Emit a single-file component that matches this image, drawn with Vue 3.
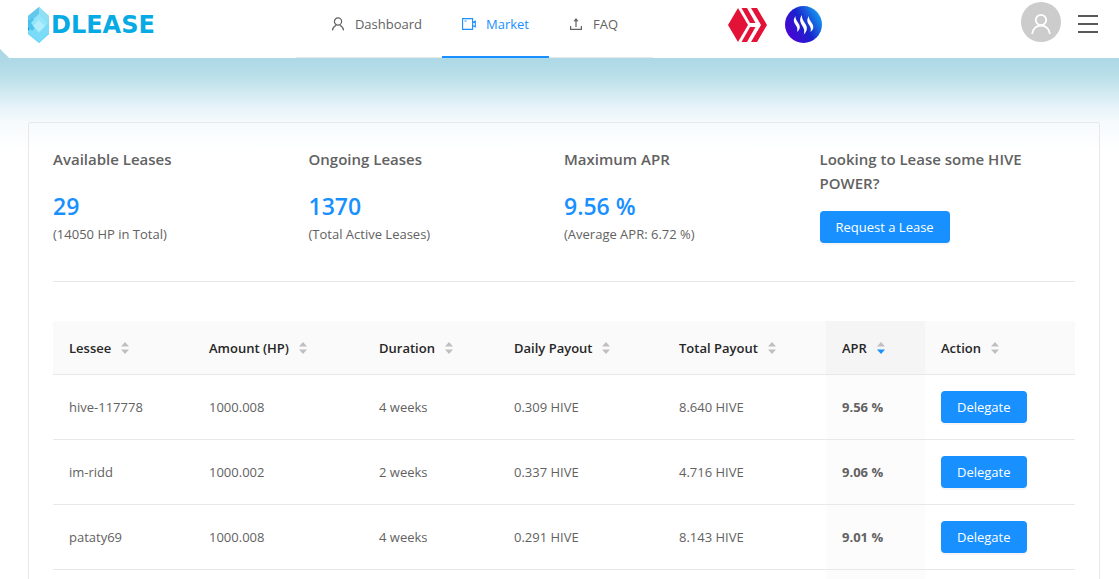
<script setup>
const stats = [
  { title: 'Available Leases', value: '29', note: '(14050 HP in Total)' },
  { title: 'Ongoing Leases', value: '1370', note: '(Total Active Leases)' },
  { title: 'Maximum APR', value: '9.56 %', note: '(Average APR: 6.72 %)' },
]
const columns = [
  { key: 'lessee', label: 'Lessee' },
  { key: 'amount', label: 'Amount (HP)' },
  { key: 'duration', label: 'Duration' },
  { key: 'daily', label: 'Daily Payout' },
  { key: 'total', label: 'Total Payout' },
  { key: 'apr', label: 'APR', sorted: true },
  { key: 'action', label: 'Action' },
]
const rows = [
  { lessee: 'hive-117778', amount: '1000.008', duration: '4 weeks', daily: '0.309 HIVE', total: '8.640 HIVE', apr: '9.56 %' },
  { lessee: 'im-ridd', amount: '1000.002', duration: '2 weeks', daily: '0.337 HIVE', total: '4.716 HIVE', apr: '9.06 %' },
  { lessee: 'pataty69', amount: '1000.008', duration: '4 weeks', daily: '0.291 HIVE', total: '8.143 HIVE', apr: '9.01 %' },
]
</script>

<template>
  <div class="page">
    <header class="header">
      <a class="logo" href="#" aria-label="Dlease home">
        <svg width="22" height="36" viewBox="0 0 22 36" aria-hidden="true">
          <path d="M11 0 21 9v18L11 36 0 27V9z" fill="#7cdcf8" />
          <path d="M11 0 0 9v7l11-9z" fill="#63c9ec" />
          <path d="M11 0 21 9v7L11 7z" fill="#8fdff5" />
          <path d="M0 13 5 18 0 24z" fill="#12a5da" />
          <path d="M0 15 4 11 11 17 4 24 0 20z" fill="#4cc3eb" />
          <path d="M11 7 20 16 11 26 3 16z" fill="#94e4fa" />
          <path d="M11 13 17 19 11 25 5 19z" fill="#b0eefd" />
          <path d="M0 24 11 34 21 24v3L11 36 0 27z" fill="#74d9f8" />
        </svg>
        <span class="wordmark">DLEASE</span>
      </a>
      <nav class="nav">
        <a class="nav-item" href="#">
          <svg width="14" height="14" viewBox="0 0 14 14" fill="none" stroke="currentColor" stroke-width="1.2" aria-hidden="true">
            <circle cx="7" cy="4.5" r="3.6" /><path d="M1.400 13.400c.3-2.600 1.800-4.300 3.700-5.200M12.600 13.400c-.3-2.600-1.800-4.300-3.700-5.200" />
          </svg>
          Dashboard
        </a>
        <a class="nav-item active" href="#">
          <svg width="14" height="14" viewBox="0 0 14 14" fill="none" stroke="currentColor" stroke-width="1.1" aria-hidden="true">
            <path d="M.6 1.600h10v10.800H.6zM10.600 5.500l2.700-1.300v5.600l-2.700-1.300M2.500 4h2" />
          </svg>
          Market
        </a>
        <a class="nav-item" href="#">
          <svg width="14" height="14" viewBox="0 0 14 14" fill="none" stroke="currentColor" stroke-width="1.200" aria-hidden="true">
            <path d="M1.600 9v3.400h10.800V9M7 10V3" /><path d="M7 1 9.500 4.200h-5z" fill="currentColor" stroke="none" />
          </svg>
          FAQ
        </a>
      </nav>
      <div class="chains">
        <a href="#" aria-label="Hive">
          <svg width="39" height="34" viewBox="0 0 39 34" fill="#e31337" aria-hidden="true">
            <path d="M10 0 20 17 10 34 0 17z" />
            <path d="M13.500 0h5.500l8.500 15h-5.500z" /><path d="M22 19h5.500l-8.500 15h-5.500z" />
            <path d="M23 0h6l10 17-10 17h-6l10-17z" />
          </svg>
        </a>
        <a href="#" aria-label="Steem">
          <svg width="37" height="37" viewBox="0 0 37 37" aria-hidden="true">
            <defs><linearGradient id="steem" x1="0" y1="0.800" x2="1" y2="0.200"><stop offset="0" stop-color="#5200d6" /><stop offset=".5" stop-color="#1a22cc" /><stop offset="1" stop-color="#15a8f4" /></linearGradient></defs>
            <circle cx="18.500" cy="18.500" r="18.500" fill="url(#steem)" />
            <g fill="#fff">
              <path d="M10.500 10c-2 2.500-2.200 5-.8 7.500l2 3.300c.9 1.700.8 3.200.3 5.200 2.800-2.400 3.500-5 2.200-7.600l-2.400-3.700c-1-1.600-1.500-2.800-1.300-4.700z" />
              <path d="M17 9c-2.200 2.800-2.400 5.600-1 8.500l2.500 4.500c1 2 .9 4 .3 6.500 3.100-3 3.900-6.200 2.400-9.300l-2.900-4.700c-1-1.700-1.500-3.200-1.300-5.500z" />
              <path d="M24 10c-2 2.500-2.200 5-.8 7.500l2 3.300c.9 1.700.8 3.200.3 5.200 2.800-2.400 3.500-5 2.200-7.600l-2.400-3.700c-1-1.600-1.500-2.800-1.300-4.700z" />
            </g>
          </svg>
        </a>
      </div>
      <div class="account">
        <button class="avatar" type="button" aria-label="Account">
          <svg width="20" height="22" viewBox="0 0 20 22" fill="none" stroke="#fff" stroke-width="1.800" aria-hidden="true">
            <circle cx="10" cy="7" r="5.200" /><path d="M1.200 21c.3-5.200 4-8.500 8.800-8.500s8.500 3.300 8.800 8.500" />
          </svg>
        </button>
        <button class="burger" type="button" aria-label="Menu"><i /><i /><i /></button>
      </div>
    </header>

    <main class="main">
      <section class="card">
        <div class="stats">
          <div v-for="s in stats" :key="s.title">
            <h2 class="stat-title">{{ s.title }}</h2>
            <div class="stat-value">{{ s.value }}</div>
            <div class="stat-note">{{ s.note }}</div>
          </div>
          <div>
            <h2 class="stat-title request">Looking to Lease some HIVE POWER?</h2>
            <button class="btn" type="button">Request a Lease</button>
          </div>
        </div>

        <table class="table">
          <colgroup><col v-for="c in columns" :key="c.key" :class="'col-' + c.key"></colgroup>
          <thead>
            <tr>
              <th v-for="c in columns" :key="c.key" :class="{ sorted: c.sorted }" scope="col">
                <button class="sort" type="button">
                  {{ c.label }}
                  <svg width="8" height="12" viewBox="0 0 8 12" fill="#bfbfbf" aria-hidden="true">
                    <path d="M4 0 8 4.500H0z" /><path class="down" d="M4 12 8 7.500H0z" />
                  </svg>
                </button>
              </th>
            </tr>
          </thead>
          <tbody>
            <tr v-for="r in rows" :key="r.lessee">
              <td>{{ r.lessee }}</td>
              <td>{{ r.amount }}</td>
              <td>{{ r.duration }}</td>
              <td>{{ r.daily }}</td>
              <td>{{ r.total }}</td>
              <td class="sorted">{{ r.apr }}</td>
              <td><button class="btn" type="button">Delegate</button></td>
            </tr>
            <tr>
              <td v-for="c in columns" :key="c.key" :class="{ sorted: c.sorted }"></td>
            </tr>
          </tbody>
        </table>
      </section>
    </main>
  </div>
</template>

<style>
body {
  margin: 0;
}
</style>

<style scoped>
.page {
  height: 100vh;
  overflow: hidden;
  font-family: "Open Sans", "Noto Sans", sans-serif;
  font-size: 13px;
  line-height: 22px;
  color: #626262;
  background: #fff;
}
.page * {
  box-sizing: border-box;
}
button {
  font: inherit;
  cursor: pointer;
}
a {
  color: inherit;
  text-decoration: none;
}
.header {
  display: grid;
  grid-template-columns: 268fr 357fr 244fr 201fr;
  height: 58px;
  padding: 0 21px 0 28px;
  background: linear-gradient(45deg, #add8e6 6px, #fff 7px);
}
.logo {
  display: flex;
  align-items: center;
  gap: 1px;
  height: 50px;
}
.wordmark {
  font: bold 24px/30px "DejaVu Sans", sans-serif;
  color: #08aae4;
}
.nav {
  display: flex;
  justify-content: center;
  height: 58px;
  border-bottom: 1px solid #e8e8e8;
}
.nav-item {
  display: flex;
  gap: 10px;
  align-items: center;
  height: 58px;
  padding: 0 20px 8px;
  border-bottom: 2px solid transparent;
}
.nav-item.active {
  color: #1890ff;
  border-color: #1890ff;
}
.chains {
  display: flex;
  align-items: center;
  justify-content: center;
  gap: 18px;
  height: 49px;
}
.chains svg {
  display: block;
}
.account {
  display: flex;
  align-items: center;
  justify-content: flex-end;
  gap: 17px;
  height: 44px;
}
.avatar {
  display: grid;
  place-items: center;
  width: 40px;
  height: 40px;
  padding: 4px 0 0;
  border: 0;
  border-radius: 50%;
  background: #ccc;
}
.burger {
  display: grid;
  gap: 6px;
  width: 20px;
  padding: 4px 0 0;
  border: 0;
  background: none;
}
.burger i {
  height: 2px;
  background: #595959;
}
.main {
  padding: 64px 19px 0 28px;
  background: linear-gradient(#add8e6 0, #b9dfe9 18px, #e6f2f9 48px, #f5fafc 64px, #fff 92px);
}
.card {
  padding: 24px 24px 0;
  border: 1px solid #e8e8e8;
  border-radius: 2px;
}
.stats {
  display: grid;
  grid-template-columns: repeat(4, 1fr);
  height: 135px;
  margin-bottom: 39px;
  border-bottom: 1px solid #e8e8e8;
}
.stat-title {
  margin: 0;
  font-size: 15px;
  font-weight: 600;
  line-height: 24px;
}
.stat-title.request {
  margin-bottom: 16px;
  padding-right: 32px;
}
.stat-value {
  margin-top: 18px;
  font-size: 23px;
  font-weight: 600;
  line-height: 34px;
  color: #1890ff;
}
.btn {
  height: 32px;
  padding: 0 16px;
  border: 0;
  border-radius: 4px;
  color: #fff;
  background: #1890ff;
  box-shadow: 0 2px 0 rgba(0, 0, 0, 0.04);
}
.btn,
.sort {
  display: block;
  white-space: nowrap;
}
.table {
  width: 100%;
  table-layout: fixed;
  border-collapse: separate;
  border-spacing: 0;
}
.col-lessee { width: 140px; }
.col-amount { width: 170px; }
.col-duration { width: 135px; }
.col-daily { width: 165px; }
.col-total { width: 163px; }
.col-apr { width: 99px; }
.col-action { width: 150px; }
th,
td {
  padding: 16px;
  border-bottom: 1px solid #e8e8e8;
  text-align: left;
}
th {
  height: 54px;
  padding: 0 16px;
  color: #262626;
  background: #fafafa;
}
th.sorted {
  background: #f5f5f5;
}
td {
  height: 65px;
}
td.sorted {
  font-weight: 700;
  background: #fcfcfc;
}
.sort {
  display: flex;
  gap: 10px;
  align-items: center;
  padding: 0;
  border: 0;
  color: inherit;
  font-weight: 600;
  background: none;
}
th.sorted .down {
  fill: #1890ff;
}
</style>
